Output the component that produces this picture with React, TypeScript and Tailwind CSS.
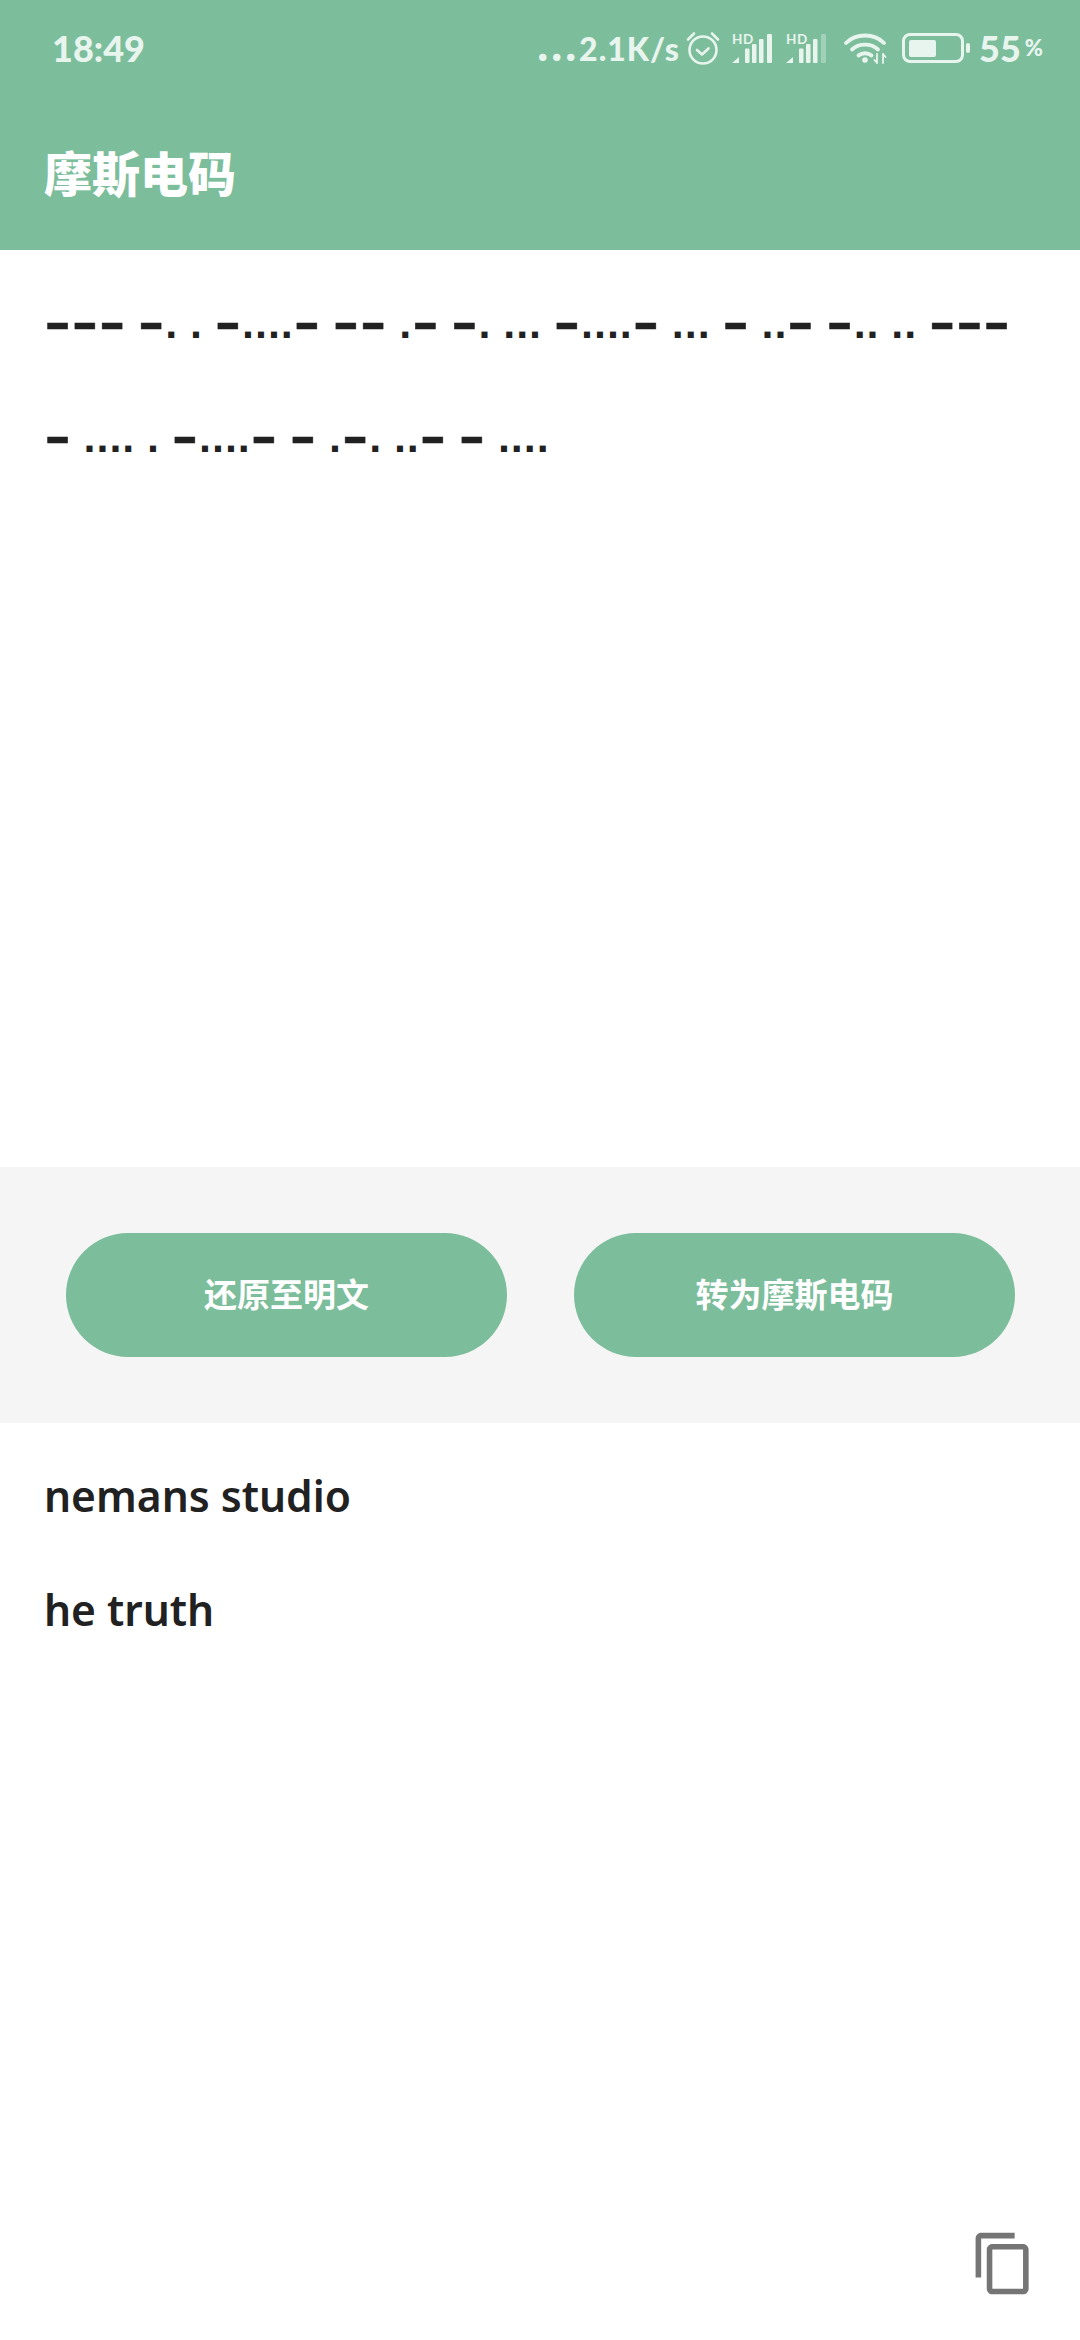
import React from "react";

const MORSE = "--- -. . -....- -- .- -. ... -....- ... - ..- -.. .. --- - .... . -....- - .-. ..- - ....";

function AlarmIcon() {
  return (
    <svg width="36" height="36" viewBox="0 0 36 36" fill="none" stroke="#e8f5ee" strokeLinecap="round">
      <circle cx="18" cy="20" r="13.5" strokeWidth="2.6" />
      <path d="M12 20l5 4.5 6.5-6" strokeWidth="2.6" strokeLinejoin="round" />
      <path d="M3 9.5L9 3.5M33 9.5L27 3.5" strokeWidth="2.6" />
    </svg>
  );
}

function SignalIcon({ dimLast }: { dimLast?: boolean }) {
  return (
    <svg width="42" height="30" viewBox="0 0 42 30" fill="#e8f5ee" className="overflow-visible">
      <text x="0" y="10.5" fontSize="13.5" fontWeight="700" fontFamily="Lato, sans-serif" letterSpacing="0.6">HD</text>
      <path d="M0 30L7 24V30Z" />
      <rect x="13" y="15.5" width="4.5" height="14.5" rx="1" />
      <rect x="20" y="11" width="4.5" height="19" rx="1" />
      <rect x="27" y="6" width="4.5" height="24" rx="1" />
      <rect x="35" y="1" width="5" height="29" rx="1" opacity={dimLast ? 0.35 : 1} />
    </svg>
  );
}

function WifiIcon() {
  return (
    <svg width="44" height="32" viewBox="0 0 44 32" fill="none" stroke="#e8f5ee" strokeLinecap="round">
      <path d="M2 11C12 1 30 1 40 11" strokeWidth="3.8" />
      <path d="M8 17.5C15 11 27 11 34 17.5" strokeWidth="3.8" />
      <path d="M14.5 23.5C18 20.5 24 20.5 27.5 23.5" strokeWidth="3.8" />
      <circle cx="21" cy="28" r="2.8" fill="#e8f5ee" stroke="none" />
      <path d="M33 22v9M33 31l-2.5-3M39 31v-9M39 22l2.5 3" strokeWidth="1.8" />
    </svg>
  );
}

function BatteryIcon() {
  return (
    <div className="flex items-center gap-[2px]">
      <div className="flex h-[30px] w-[62px] items-center rounded-[8px] border-[3px] border-[#e8f5ee] px-[4px]">
        <div className="h-[17px] w-[27px] rounded-[2px] bg-[#e8f5ee]" />
      </div>
      <div className="h-[10px] w-[4px] rounded-full bg-[#e8f5ee]" />
    </div>
  );
}

function CopyIcon() {
  return (
    <svg width="67" height="67" viewBox="0 0 24 24" fill="#757575">
      <path d="M16 1H4c-1.1 0-2 .9-2 2v14h2V3h12V1zm3 4H8c-1.1 0-2 .9-2 2v14c0 1.1.9 2 2 2h11c1.1 0 2-.9 2-2V7c0-1.1-.9-2-2-2zm0 16H8V7h11v14z" />
    </svg>
  );
}

function ActionButton({ label }: { label: string }) {
  return (
    <button className="flex h-[124px] w-[441px] items-center justify-center rounded-[62px] bg-[#7cbd9b] text-[33px] font-bold text-white">
      {label}
    </button>
  );
}

// hyphens sit higher and run wider than the dots in the reference
function MorseText({ value }: { value: string }) {
  return (
    <p className="font-['DejaVu_Sans',sans-serif] text-[34px] leading-[114px] font-bold text-[#212121]">
      {value.split(/(-+)/).map((part, i) =>
        part.startsWith("-") ? (
          <span key={i} className="align-[-9px] text-[75.5px] leading-none font-normal [-webkit-text-stroke:0.6px_#212121]">{part}</span>
        ) : (
          <span key={i}>{part}</span>
        )
      )}
    </p>
  );
}

export default function App() {
  return (
    <div className="flex h-[2340px] w-[1080px] flex-col bg-white font-['Noto_Sans','Noto_Sans_CJK_SC',sans-serif]">
      <header className="flex h-[250px] flex-col bg-[#7cbd9b]">
        <div className="flex h-[96px] items-center justify-between pl-[52px] pr-[37px] font-['Lato',sans-serif] text-[#e8f5ee]">
          <span className="text-[36px] leading-none font-black">18:49</span>
          <div className="flex items-center">
            <span className="-mt-[8px] text-[32px] leading-none font-black tracking-[1px]">
              <span className="text-[46px] tracking-[3px]">...</span>2.1K/s
            </span>
            <div className="ml-[5px]"><AlarmIcon /></div>
            <div className="ml-[11px]"><SignalIcon /></div>
            <div className="ml-[12px]"><SignalIcon dimLast /></div>
            <div className="ml-[16px]"><WifiIcon /></div>
            <div className="ml-[14px]"><BatteryIcon /></div>
            <span className="ml-[9px] text-[36px] leading-none font-black">55</span>
            <span className="ml-[4px] text-[22px] leading-none font-black">%</span>
          </div>
        </div>
        <h1 className="mt-[51px] pl-[44px] font-['Noto_Sans_CJK_SC',sans-serif] text-[48px] leading-none font-black text-white">摩斯电码</h1>
      </header>

      <section className="h-[917px] px-[44px] pt-[19px]">
        <MorseText value={MORSE} />
      </section>

      <section className="flex h-[256px] items-center justify-between bg-[#f5f5f5] pl-[66px] pr-[65px]">
        <ActionButton label="还原至明文" />
        <ActionButton label="转为摩斯电码" />
      </section>

      <section className="flex flex-1 flex-col pl-[44px] pr-[43px] pb-[43px] pt-[16px]">
        <p className="text-[42.5px] leading-[114px] font-semibold text-[#212121]">nemans studio</p>
        <p className="text-[42.5px] leading-[114px] font-semibold text-[#212121]">he truth</p>
        <div className="mt-auto self-end"><CopyIcon /></div>
      </section>
    </div>
  );
}
